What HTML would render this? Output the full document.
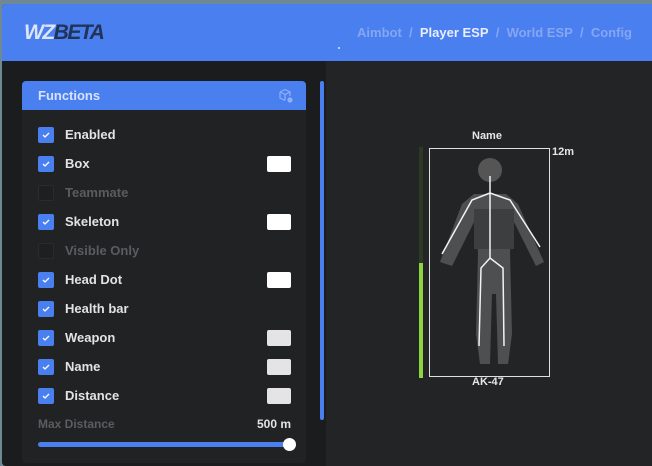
<!DOCTYPE html>
<html><head><style>
body{margin:0;width:652px;height:463px;background:#6f8896;overflow:hidden;font-family:"Liberation Sans",sans-serif;font-weight:bold}
#win{position:absolute;left:2px;top:4px;width:652px;height:462px;background:#232426;border-radius:4px 0 0 4px;overflow:hidden}
#hdr{position:absolute;left:0;top:0;width:100%;height:57px;background:#4a7ff0}
#logo{position:absolute;left:22px;top:17px;font-size:21px;font-style:italic;letter-spacing:-1.5px}
#nav{position:absolute;right:22px;top:21px;font-size:13px;color:#86a6f2;white-space:nowrap}
#nav b{color:#e8eefc}
#left{position:absolute;left:0;top:57px;width:324px;height:410px;background:#1b1c1e}
#card{position:absolute;left:20px;top:77px;width:284px;height:382px;background:#212224;border-radius:4px;overflow:hidden}
#ch{height:29px;background:#4a7ff0;color:#d8e3fb;font-size:13px;line-height:29px;padding-left:16px}
.row{position:absolute;left:16px;width:260px;height:16px;font-size:13px;color:#e2e3e5;line-height:16px}
.cb{position:absolute;left:0;top:0;width:16px;height:16px;border-radius:2px;background:#4a7ff0}
.cb.off{background:#1e1f21;border:1px solid #2a2b2d;width:14px;height:14px}
.row span{position:absolute;left:27px;white-space:nowrap}
.row.dis{color:#5b5c5f}
.sw{position:absolute;left:229px;top:0;width:24px;height:16px;border-radius:2px;background:#fff}
.sw.g{background:#e4e4e6}
#sb{position:absolute;left:318px;top:77px;width:4px;height:339px;background:#4a7ff0;border-radius:2px}
.lbl{position:absolute;color:#e6e6e6;font-size:11px}
</style></head><body>
<div id="win">
<div id="hdr">
<div id="logo"><span style="color:#dde6f8">WZ</span><span style="color:#213356">BETA</span></div>
<div id="nav">Aimbot&nbsp; /&nbsp; <b>Player ESP</b>&nbsp; /&nbsp; World ESP&nbsp; /&nbsp; Config</div>
<div style="position:absolute;left:336px;top:43px;width:2px;height:2px;background:#dfe8fb;border-radius:1px"></div>
</div>
<div id="left"></div>
<div id="card">
<div id="ch">Functions</div>
<svg style="position:absolute;left:256px;top:7px" width="16" height="16" viewBox="0 0 16 16" fill="none" stroke="#8fb0f4" stroke-width="1.2"><path d="M2 4 L7 1.5 L12 4 L12 8 M2 4 L2 10 L7 12.5 M2 4 L7 6.5 L12 4 M7 6.5 V12"/><circle cx="12" cy="12" r="2" fill="#8fb0f4"/></svg>
<div class="row" style="top:46px"><div class="cb"></div><svg style="position:absolute;left:4px;top:4px" width="8" height="8"><path d="M1 4 L3 6 L7 2" stroke="#fff" stroke-width="1.3" fill="none"/></svg><span>Enabled</span></div>
<div class="row" style="top:75px"><div class="cb"></div><svg style="position:absolute;left:4px;top:4px" width="8" height="8"><path d="M1 4 L3 6 L7 2" stroke="#fff" stroke-width="1.3" fill="none"/></svg><span>Box</span><div class="sw"></div></div>
<div class="row dis" style="top:104px"><div class="cb off"></div><span>Teammate</span></div>
<div class="row" style="top:133px"><div class="cb"></div><svg style="position:absolute;left:4px;top:4px" width="8" height="8"><path d="M1 4 L3 6 L7 2" stroke="#fff" stroke-width="1.3" fill="none"/></svg><span>Skeleton</span><div class="sw"></div></div>
<div class="row dis" style="top:162px"><div class="cb off"></div><span>Visible Only</span></div>
<div class="row" style="top:191px"><div class="cb"></div><svg style="position:absolute;left:4px;top:4px" width="8" height="8"><path d="M1 4 L3 6 L7 2" stroke="#fff" stroke-width="1.3" fill="none"/></svg><span>Head Dot</span><div class="sw"></div></div>
<div class="row" style="top:220px"><div class="cb"></div><svg style="position:absolute;left:4px;top:4px" width="8" height="8"><path d="M1 4 L3 6 L7 2" stroke="#fff" stroke-width="1.3" fill="none"/></svg><span>Health bar</span></div>
<div class="row" style="top:249px"><div class="cb"></div><svg style="position:absolute;left:4px;top:4px" width="8" height="8"><path d="M1 4 L3 6 L7 2" stroke="#fff" stroke-width="1.3" fill="none"/></svg><span>Weapon</span><div class="sw g"></div></div>
<div class="row" style="top:278px"><div class="cb"></div><svg style="position:absolute;left:4px;top:4px" width="8" height="8"><path d="M1 4 L3 6 L7 2" stroke="#fff" stroke-width="1.3" fill="none"/></svg><span>Name</span><div class="sw g"></div></div>
<div class="row" style="top:307px"><div class="cb"></div><svg style="position:absolute;left:4px;top:4px" width="8" height="8"><path d="M1 4 L3 6 L7 2" stroke="#fff" stroke-width="1.3" fill="none"/></svg><span>Distance</span><div class="sw g"></div></div>
<div style="position:absolute;left:16px;top:336px;font-size:12px;color:#5b5c5f">Max Distance</div>
<div style="position:absolute;right:15px;top:336px;font-size:12px;color:#e2e3e5">500 m</div>
<div style="position:absolute;left:16px;top:361px;width:252px;height:5px;background:#4a7ff0;border-radius:3px"></div>
<div style="position:absolute;left:261px;top:357px;width:13px;height:13px;background:#fff;border-radius:50%"></div>
</div>
<div id="sb"></div>
<svg style="position:absolute;left:2px;top:0" width="652" height="463">
<g fill="#4b4c4e">
<rect x="415" y="143" width="4" height="231" fill="#2c3a24"/>
<rect x="415" y="259" width="4" height="115" fill="#8ed43e"/>
<circle cx="486" cy="166" r="12" fill="#555"/>
<path d="M470 190 L502 190 L514 200 L540 258 L532 262 L510 218 L506 248 L508 330 L504 360 L494 360 L492 290 L488 290 L486 360 L476 360 L472 330 L474 248 L470 218 L448 262 L436 258 L458 200 Z" fill="#4e4f51"/>
<rect x="470" y="205" width="40" height="40" fill="#3d3e40"/>
</g>
<rect x="425.5" y="144.5" width="120" height="228" fill="none" stroke="#e0e0e0" stroke-width="1"/>
<g stroke="#f2f2f2" stroke-width="1.5" fill="none">
<path d="M486 172 L486 254"/>
<path d="M486 189 L468 196 L438 250"/>
<path d="M486 189 L506 196 L536 243"/>
<path d="M486 254 L477 264 L475 342"/>
<path d="M486 254 L499 264 L500 342"/>
</g>
</svg>
<div class="lbl" style="left:470px;top:126px">Name</div>
<div class="lbl" style="left:550px;top:142px">12m</div>
<div class="lbl" style="left:470px;top:372px">AK-47</div>
</div>
</body></html>
